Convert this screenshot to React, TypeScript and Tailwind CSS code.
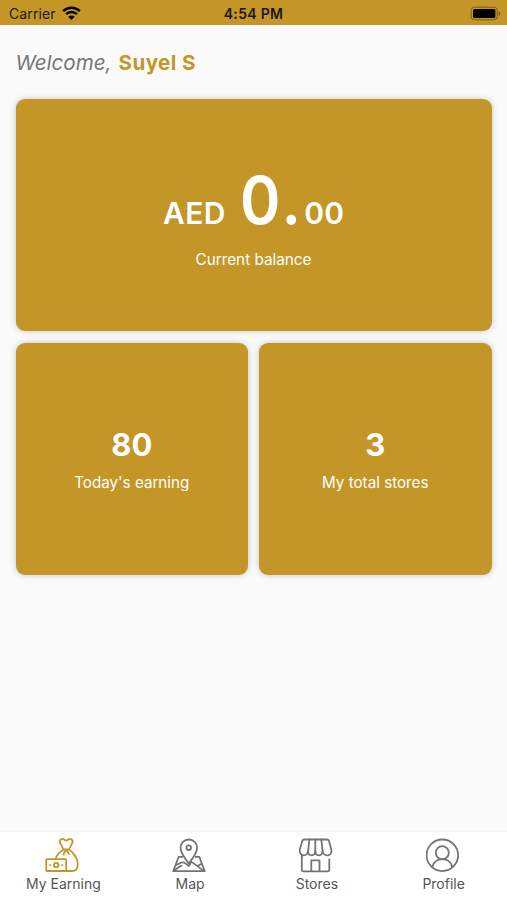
import type { ReactNode } from "react";

interface TabProps {
  label: string;
  active?: boolean;
  children: ReactNode;
}

export default function App() {
  return (
    <div className="flex h-[900px] w-full flex-col overflow-hidden bg-[#fafafa] font-['Inter',sans-serif]">
      <StatusBar />

      <main className="flex-1 px-[15.5px] pt-[21.5px]">
        <h1 className="flex h-[52px] gap-[7px] text-[20.6px] leading-8 whitespace-nowrap">
          <span className="text-[#777] italic">Welcome,</span>
          <span className="font-bold tracking-[0.4px] text-[#c49628]">Suyel S</span>
        </h1>

        <section className="flex h-[232.5px] flex-col items-center rounded-[9px] bg-[#c49628] pt-[63px] text-white shadow-[0_0_6px_rgba(0,0,0,0.22)]">
          <p className="flex items-baseline leading-[76px] font-semibold whitespace-nowrap">
            <span className="text-[30px] tracking-[0.3px]">AED</span>
            <span className="-mr-[4px] ml-[14px] origin-left scale-x-[0.93] text-[66px] tracking-[3px]">0.</span>
            <span className="text-[30px]">00</span>
          </p>
          <p className="-mt-[3px] text-[15.3px] leading-6">Current balance</p>
        </section>

        <div className="mt-[11.5px] grid grid-cols-2 gap-[11px]">
          <StatCard value="80" label="Today's earning" />
          <StatCard value="3" label="My total stores" />
        </div>
      </main>

      <nav className="grid h-[68px] grid-cols-4 bg-white shadow-[0_-1px_1px_rgba(0,0,0,0.02)]">
        <Tab label="My Earning" active>
          <rect x="1.2" y="22.2" width="20" height="11.8" rx="0.7" />
          <circle cx="11.2" cy="28.1" r="2.3" />
          <path d="M5 28.1h.4M17 28.1h.4" />
          <path d="M18.5 12.4 15.2 6.1c-1.5-3 1.8-5.2 4-3.6.8.6 1.5 1.1 2 1.1s1.2-.5 2-1.1c2.2-1.6 5.5.6 4 3.6l-3.3 6.3Z" />
          <path d="M18.3 12.8C14 15.3 11.6 18.5 10.6 22.1M24.2 12.8c4.8 3.2 8.6 9 8.6 14.4 0 4.5-2.3 6.8-6 6.8h-5.6M20.8 12.8l-2.3 4.7M21.4 12.8l2.5 4.2" />
        </Tab>
        <Tab label="Map">
          <path d="M16.8 26.5C14 22.7 8.5 16.3 8.5 10.8a8.3 8.3 0 0 1 16.6 0c0 5.5-5.4 11.9-8.3 15.7Z" />
          <circle cx="16.7" cy="10.7" r="2.3" />
          <path d="M10.4 19.8H6.7L1.2 34.2h31.5l-5.4-14.4h-3.9M3.8 28.2l5-2.4c1.8-.9 3-.6 4.6.6l3.4 2.6 2.6-4.2M2 33.6l7.4-5M20.6 25.6l10.8 8M25.4 29l4.6-2.4" />
        </Tab>
        <Tab label="Stores">
          <path d="M5.2 2.5h22.9c1.1 0 1.6.6 1.9 1.5l2.4 8.7v1.2c0 2.5-1.8 4.4-4.2 4.4-2.7 0-4.6-2-4.6-4.5 0 2.5-1.4 4.5-3.7 4.5-2.2 0-3.6-2-3.6-4.5 0 2.5-1.4 4.5-3.7 4.5s-3.6-2-3.6-4.5c0 2.5-1.8 4.5-4.4 4.5-2.4 0-3.9-1.9-3.9-4.4v-1.2L3.3 4c.3-.9.8-1.5 1.9-1.5Z" />
          <path d="M10.4 2.5 9.2 13.8M16.3 2.5v11.3M22.3 2.5l1.3 11.3M2.8 17.5v15c0 1.2.6 1.8 1.8 1.8h23.9c1.2 0 1.8-.6 1.8-1.8V22.3M12.3 34.2V23.3h8.2v10.9" />
        </Tab>
        <Tab label="Profile">
          <circle cx="16.3" cy="18.3" r="15.8" />
          <circle cx="16.3" cy="15.7" r="6.5" />
          <path d="M6.1 30.2c1.5-4.8 5.1-8 10.2-8s8.7 3.2 10.2 8" />
        </Tab>
      </nav>
    </div>
  );
}

function StatusBar() {
  return (
    <header className="grid h-[25px] grid-cols-3 items-center bg-[#c49628] pt-[2px] text-[14px] text-[#1c1606]">
      <div className="flex items-center gap-[6px] pl-[9px]">
        <span className="text-[14px] tracking-[0.1px]">Carrier</span>
        <svg className="h-[15px] w-[19px]" viewBox="0 0 19 15" fill="none" stroke="black">
          <path d="M1.2 5.1a12 12 0 0 1 16.6 0M4.1 8.2a7.7 7.7 0 0 1 10.8 0" strokeWidth="2.4" />
          <path d="M6.3 10.8a4.5 4.5 0 0 1 6.4 0L9.5 14Z" fill="black" stroke="none" />
        </svg>
      </div>
      <span className="text-center text-[14px] font-semibold tracking-[0.3px]">4:54 PM</span>
      <svg className="mr-[5px] mb-[1px] h-[15px] w-[32px] justify-self-end" viewBox="0 0 32 15">
        <rect x="1.2" y="1.2" width="26" height="12.6" rx="3.2" fill="none" stroke="#7b5e16" />
        <rect x="3" y="3" width="22.4" height="9" rx="1.5" fill="black" />
        <path d="M28.5 5.2c2.5.8 2.5 3.8 0 4.6Z" fill="#7b5e16" />
      </svg>
    </header>
  );
}

function StatCard({ value, label }: { value: string; label: string }) {
  return (
    <section className="flex h-[232px] flex-col items-center rounded-[9px] bg-[#c49628] pt-[82.5px] text-white shadow-[0_0_6px_rgba(0,0,0,0.22)]">
      <p className="text-[31px] leading-10 font-bold">{value}</p>
      <p className="mt-[6px] text-[15.2px] leading-6">{label}</p>
    </section>
  );
}

function Tab({ label, active, children }: TabProps) {
  return (
    <button className="flex flex-col items-center pt-[5px]">
      <svg
        className={active ? "size-9 text-[#c49628]" : "size-9 text-[#747474]"}
        viewBox="0 0 36 36"
        fill="none"
        stroke="currentColor"
        strokeWidth="1.8"
        strokeLinecap="round"
        strokeLinejoin="round"
      >
        {children}
      </svg>
      <span className="text-[14px] leading-[22px] whitespace-nowrap text-[#555]">{label}</span>
    </button>
  );
}
